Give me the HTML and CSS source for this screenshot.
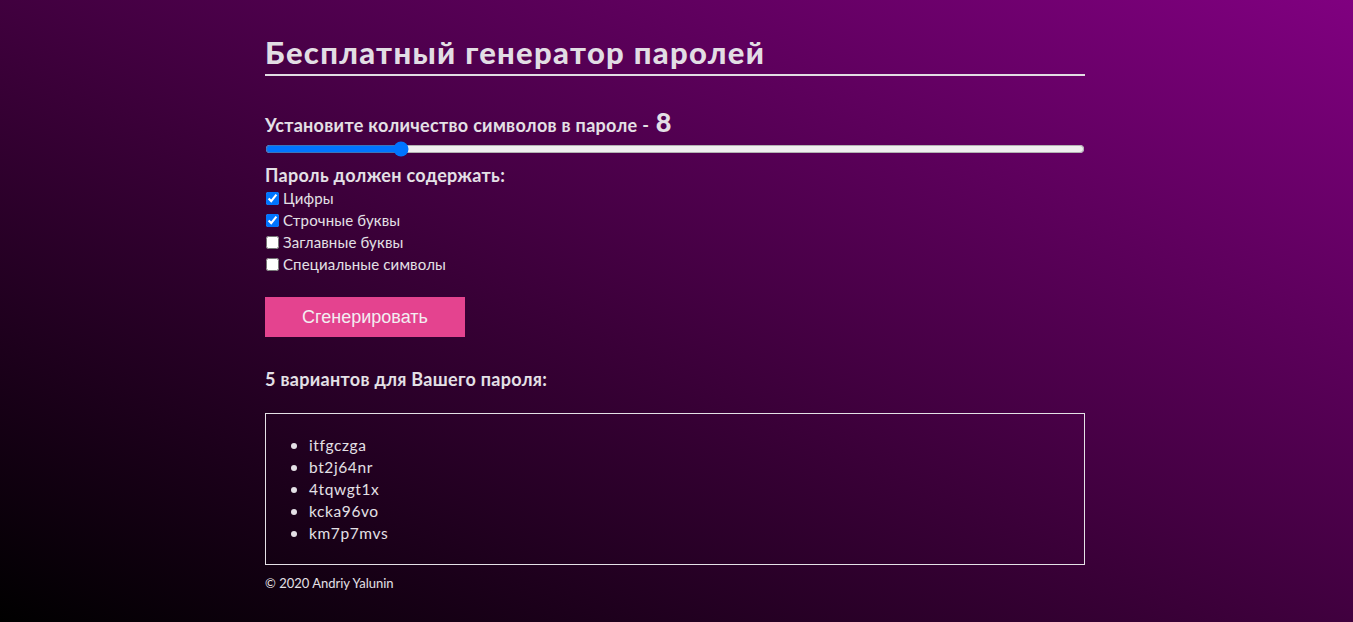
FILE: index.html
```html
<!DOCTYPE html>
<html lang="ru">
<head>
<meta charset="utf-8">
<title>Бесплатный генератор паролей</title>
<link rel="stylesheet" href="styles.css">
</head>
<body>
<main class="wrap">
  <h1 class="title">Бесплатный генератор паролей</h1>
  <div class="length">
    <label class="label" for="len">Установите количество символов в пароле - <span class="num">8</span></label>
    <input class="range" id="len" type="range" min="1" max="45" value="8">
  </div>
  <div class="opts">
    <div class="label">Пароль должен содержать:</div>
    <label class="opt"><input type="checkbox" checked> Цифры</label>
    <label class="opt"><input type="checkbox" checked> Строчные буквы</label>
    <label class="opt"><input type="checkbox"> Заглавные буквы</label>
    <label class="opt"><input type="checkbox"> Специальные символы</label>
  </div>
  <button class="btn" type="button">Сгенерировать</button>
  <div class="label results-title">5 вариантов для Вашего пароля:</div>
  <div class="results">
    <ul class="list">
      <li>itfgczga</li>
      <li>bt2j64nr</li>
      <li>4tqwgt1x</li>
      <li>kcka96vo</li>
      <li>km7p7mvs</li>
    </ul>
  </div>
  <footer class="foot">© 2020 Andriy Yalunin</footer>
</main>
</body>
</html>
```

FILE: styles.css
```css
html, body {
  margin: 0;
  height: 100%;
}
body {
  background: linear-gradient(to top right, #000 0%, #3a0038 45%, #800080 100%);
  color: #e4e0e6;
  font-family: Lato, "Open Sans", sans-serif;
  font-size: 15px;
}
.wrap {
  width: 820px;
  margin: 0 0 0 calc(50% - 411.5px);
  padding-top: 34px;
}
.title {
  margin: 0;
  font-size: 31px;
  line-height: 36px;
  font-weight: 900;
  letter-spacing: 1.3px;
  color: #e2dde4;
  padding-bottom: 4px;
  border-bottom: 2px solid #e2dde4;
}
.length {
  margin-top: 34px;
}
.label {
  display: block;
  font-size: 18px;
  font-weight: 700;
  line-height: 24px;
  letter-spacing: 0.3px;
  color: #e4e0e6;
}
.num {
  margin-left: 2px;
  font-size: 27px;
  font-weight: 900;
}
.range {
  display: block;
  width: 100%;
  margin: 4px 0 0;
  height: 16px;
}
.opts {
  margin-top: 6px;
}
.opt {
  display: flex;
  align-items: center;
  gap: 4px;
  line-height: 22px;
  font-size: 15px;
  letter-spacing: 0.15px;
}
.opt input {
  margin: 0 0 0 1px;
  width: 13px;
  height: 13px;
}
.btn {
  display: block;
  margin-top: 22px;
  width: 200px;
  height: 40px;
  border: 0;
  background: #e4438f;
  color: #f3eef2;
  font-family: "Liberation Sans", Arial, sans-serif;
  font-size: 18px;
}
.results-title {
  margin-top: 30px;
}
.results {
  margin-top: 22px;
  border: 1px solid #e4e0e6;
  padding: 20px 0 20px;
}
.list {
  margin: 0;
  padding-left: 43px;
}
.list li {
  line-height: 22px;
  font-size: 15.5px;
  letter-spacing: 0.6px;
  padding-left: 0;
}
.list li::marker {
  font-size: 17px;
}
.foot {
  margin-top: 9px;
  font-size: 13px;
  line-height: 18px;
}
```
